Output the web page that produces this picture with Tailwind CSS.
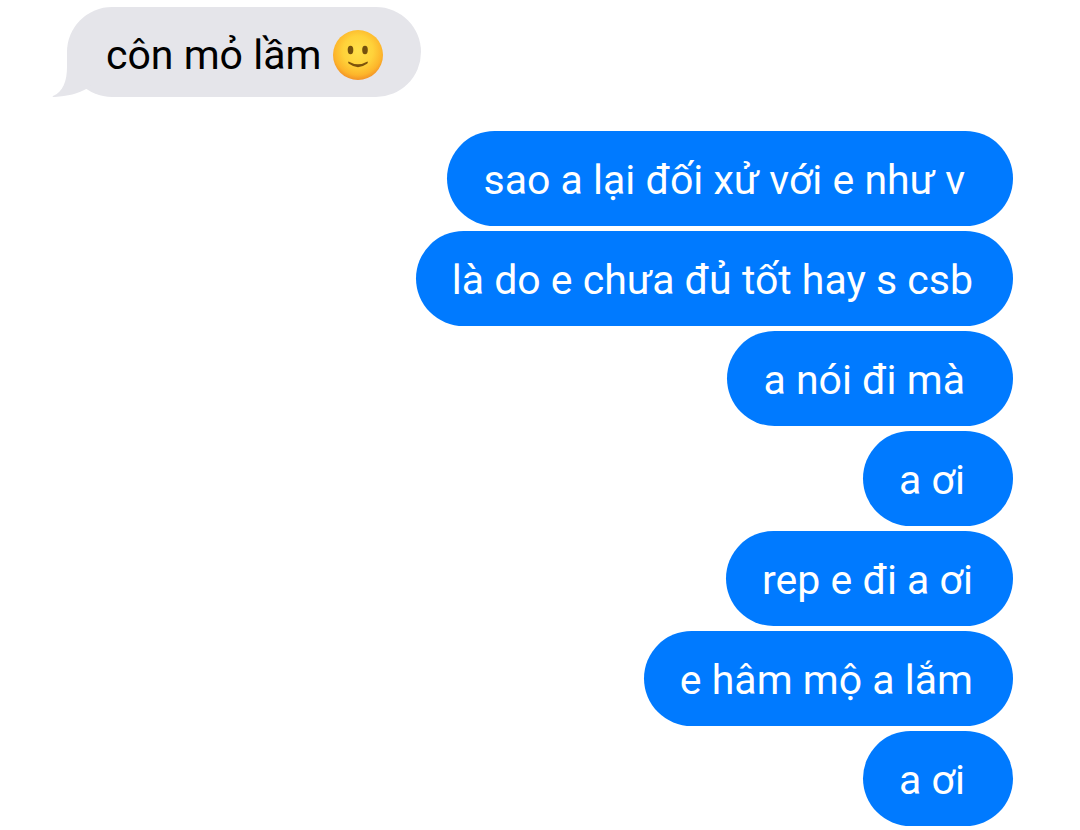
<!DOCTYPE html>
<html lang="vi">

<head>
    <meta charset="UTF-8">
    <meta name="viewport" content="width=device-width, initial-scale=1.0">
    <title>Messages</title>
    <script src="https://cdn.jsdelivr.net/npm/@tailwindcss/browser@4"></script>
</head>

<body class="bg-white font-['Roboto','Noto_Sans',sans-serif] text-[41px] leading-[50px]">
    <main class="flex flex-col pt-[7px] px-[67px] overflow-hidden">
        <!-- Received -->
        <div class="relative self-start flex items-center gap-3 rounded-[45px] bg-[#e5e5ea] pt-[23px] pb-[17px] pl-[39px] pr-[38px] text-black">
            <!-- Bubble tail -->
            <svg class="absolute -left-[15px] bottom-0 w-[56px] h-[50px]" viewBox="0 0 56 50" fill="#e5e5ea" aria-hidden="true">
                <path d="M15 5V20C15 34 11 45 1 49C0 50 1 50 3 50C15 49 26 47 36 41L50 30L40 5Z" />
            </svg>
            <p class="relative">côn mỏ lầm</p>
            <svg class="relative size-[50px]" viewBox="0 0 50 50" role="img" aria-label="🙂">
                <defs>
                    <radialGradient id="face" cx="50%" cy="42%" r="60%">
                        <stop offset="0" stop-color="#ffe04a" />
                        <stop offset="0.5" stop-color="#ffd23a" />
                        <stop offset="0.8" stop-color="#fdb52b" />
                        <stop offset="1" stop-color="#f08a26" />
                    </radialGradient>
                </defs>
                <circle cx="25" cy="25" r="25" fill="url(#face)" />
                <ellipse cx="17.500" cy="20" rx="2.800" ry="4.200" fill="#74500d" />
                <ellipse cx="32" cy="20" rx="2.800" ry="4.200" fill="#74500d" />
                <path d="M15.500 31.500C15 32 15 33 16 33.800Q25 40.500 34 33.800C35 33 35 32 34.500 31.500Q25 37 15.500 31.500Z" fill="#7d530c" />
            </svg>
        </div>

        <!-- Sent -->
        <div class="mt-[34px] flex flex-col items-end gap-[5px] text-white">
            <p class="rounded-[48px] bg-[#007aff] pt-[24px] pb-[21px] pl-[36px] pr-[48px]">sao a lại đối xử với e như v</p>
            <p class="rounded-[48px] bg-[#007aff] pt-[24px] pb-[21px] pl-[36px] pr-[40px]">là do e chưa đủ tốt hay s csb</p>
            <p class="rounded-[48px] bg-[#007aff] pt-[24px] pb-[21px] pl-[36px] pr-[48px]">a nói đi mà</p>
            <p class="rounded-[48px] bg-[#007aff] pt-[24px] pb-[21px] pl-[36px] pr-[48px]">a ơi</p>
            <p class="rounded-[48px] bg-[#007aff] pt-[24px] pb-[21px] pl-[36px] pr-[40px]">rep e đi a ơi</p>
            <p class="rounded-[48px] bg-[#007aff] pt-[24px] pb-[21px] pl-[36px] pr-[40px]">e hâm mộ a lắm</p>
            <p class="rounded-[48px] bg-[#007aff] pt-[24px] pb-[21px] pl-[36px] pr-[48px]">a ơi</p>
        </div>
    </main>
</body>

</html>
